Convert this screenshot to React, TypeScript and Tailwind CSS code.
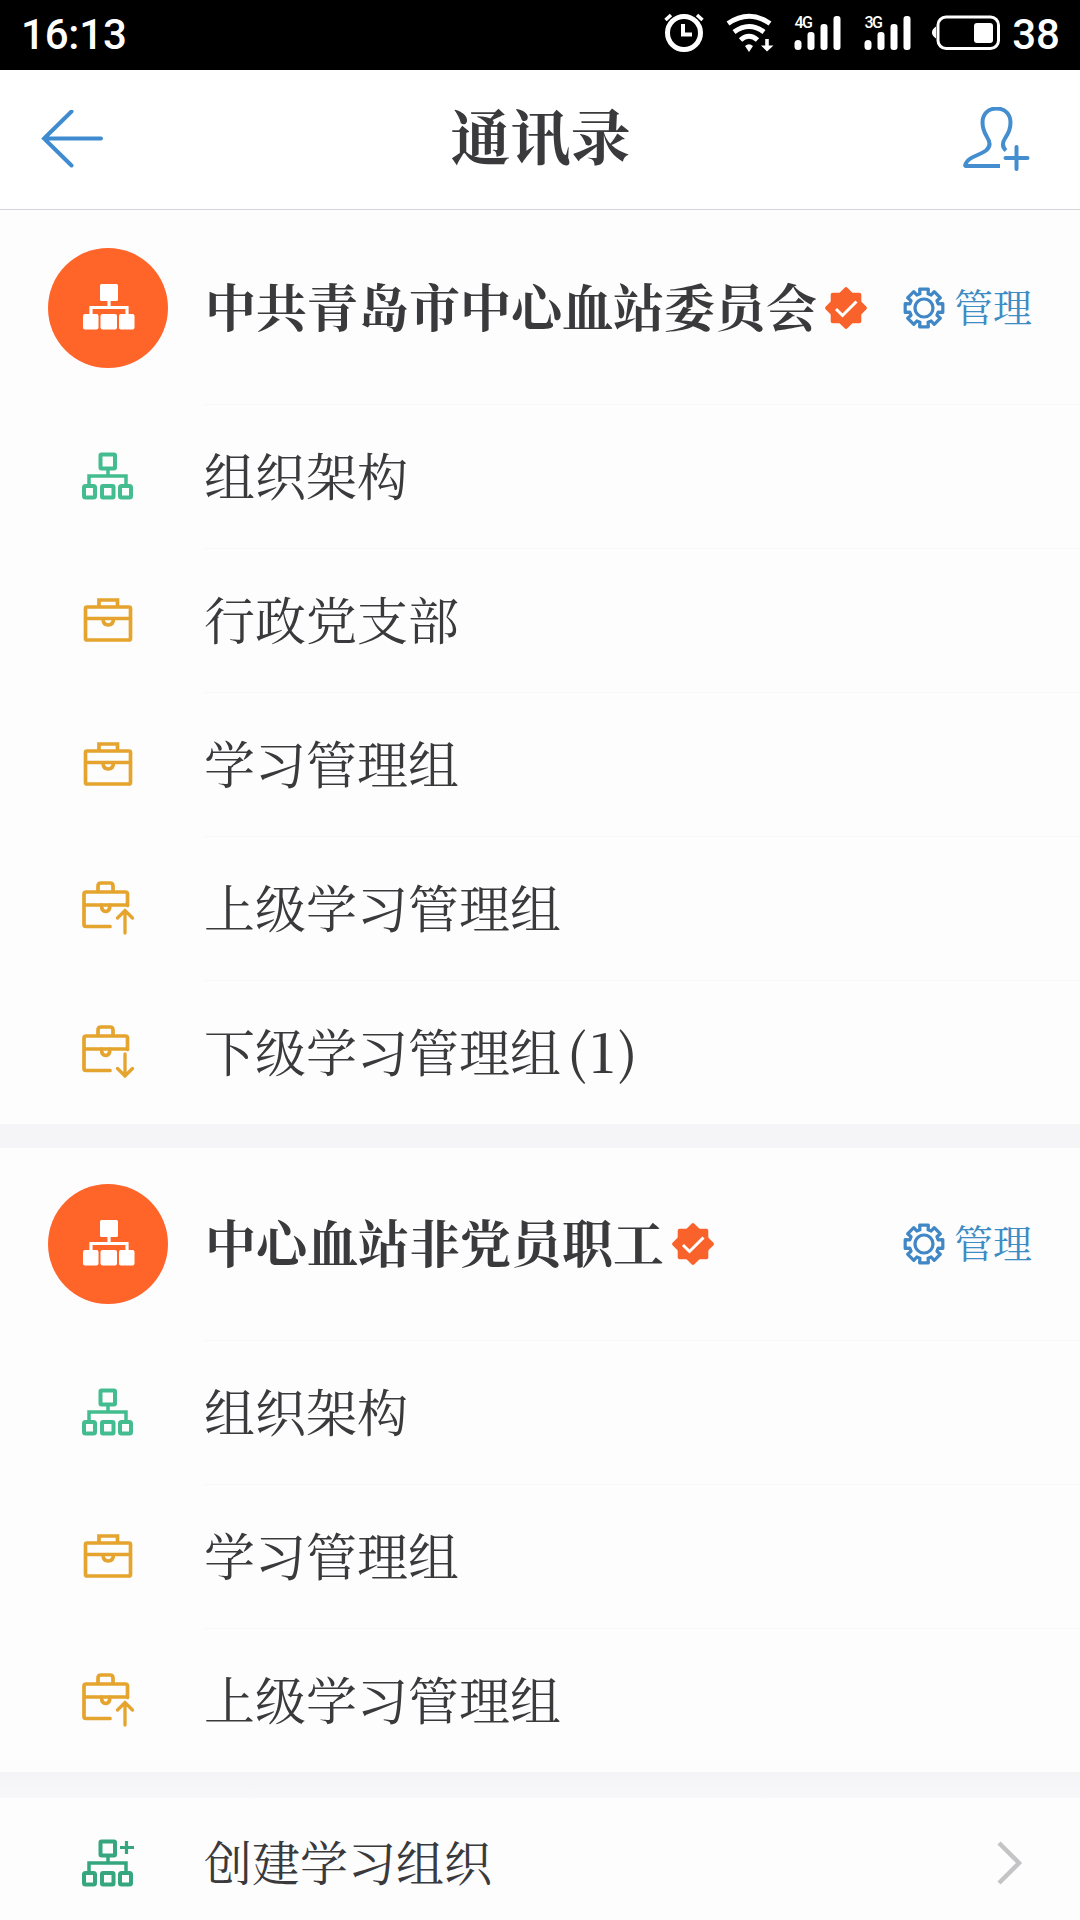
import type { ReactNode } from "react";

type RowIcon = "org" | "case" | "caseUp" | "caseDown";

type Row = {
    icon: RowIcon;
    label: string;
    count?: string;
};

const partyRows: Row[] = [
    { icon: "org", label: "组织架构" },
    { icon: "case", label: "行政党支部" },
    { icon: "case", label: "学习管理组" },
    { icon: "caseUp", label: "上级学习管理组" },
    { icon: "caseDown", label: "下级学习管理组", count: "(1)" },
];

const staffRows: Row[] = [
    { icon: "org", label: "组织架构" },
    { icon: "case", label: "学习管理组" },
    { icon: "caseUp", label: "上级学习管理组" },
];

// outline of the eight-toothed gear: [radius, degrees from the tooth centre]
const toothCorners = [[14.8, -16], [19.3, -13], [19.3, 13], [14.8, 16]];
const gearPoints = Array.from({ length: 8 }, (_, tooth) =>
    toothCorners.map(([r, deg]) => {
        const a = ((tooth * 45 + deg) * Math.PI) / 180;
        return `${(r * Math.cos(a)).toFixed(2)},${(r * Math.sin(a)).toFixed(2)}`;
    }).join(" ")
).join(" ");

function Signal({ type }: { type: string }) {
    return (
        <svg className="h-[38px] w-12" viewBox="0 0 48 38" fill="#fff">
            <text x="0.5" y="13.5" fontSize="16" fontWeight="500" fontFamily="Roboto, sans-serif" textLength="18.5">{type}</text>
            <rect x="0.5" y="26" width="7" height="10" rx="3.5" />
            <rect x="13.5" y="18" width="7" height="18" rx="3" />
            <rect x="26.5" y="10" width="7" height="26" rx="3" />
            <rect x="39.5" y="2" width="7" height="34" rx="3" />
        </svg>
    );
}

function StatusBar() {
    return (
        <div className="flex h-[70px] items-center bg-black pl-[21px] pr-[20px] pb-1 font-[Roboto,sans-serif] text-[42px] font-medium text-white">
            <span className="flex-1 pt-0.5 tracking-[-0.2px]">16:13</span>
            <svg className="mr-[22px] h-10 w-10" viewBox="0 0 40 40" fill="none" stroke="#fff">
                <circle cx="20" cy="20" r="16.5" strokeWidth="5" />
                <path d="M19 11v10.500h9" strokeWidth="4" />
                <path d="M1.500 7 7 2M38.500 7 33 2" strokeWidth="3.500" />
            </svg>
            <svg className="mr-5 h-10 w-12" viewBox="0 0 48 40" fill="none" stroke="#fff" strokeWidth="5">
                <path d="M2 10.500Q23-4 44 10.500" />
                <path d="M8 19Q23 8 38 19" />
                <path d="M14.500 27Q23 19.500 31.500 27" />
                <path d="M19 33q4-3.500 8 0l-4 6z" fill="#fff" stroke="none" />
                <path d="M41 26v9" strokeWidth="3.600" />
                <path d="M35 32.500h12.500L41 38.500z" fill="#fff" stroke="none" />
            </svg>
            <Signal type="4G" />
            <span className="w-[22px]" />
            <Signal type="3G" />
            <svg className="ml-[18px] mr-[12px] h-[38px] w-[70px]" viewBox="0 0 70 38">
                <rect x="8" y="3" width="60.500" height="31.500" rx="8" fill="none" stroke="#fff" strokeWidth="3" />
                <path d="M6 12.500C3 14.500 2 16.500 2 18.500s1 4 4 6z" fill="#fff" />
                <rect x="44" y="9" width="19" height="20" rx="3" fill="#fff" />
            </svg>
            <span className="pt-0.5">38</span>
        </div>
    );
}

function OrgIcon({ plus = false }: { plus?: boolean }) {
    return (
        <svg className="h-12 w-[54px]" viewBox="0 0 54 48" fill="none" stroke={plus ? "#35a67e" : "#43bd8f"} strokeWidth="4">
            <rect x="19.500" y="2.500" width="14.500" height="14" rx="1" />
            <path d="M27 17v6M8 33v-9h37v9" strokeWidth="3.500" />
            <rect x="3" y="34" width="11" height="11.500" rx="1.500" />
            <rect x="21" y="34" width="11.500" height="11.500" rx="1" />
            <rect x="39" y="34" width="11" height="11.500" rx="1.500" />
            {plus && <path d="M45.500 2v13M39 8.500h14" strokeWidth="3.200" />}
        </svg>
    );
}

function CaseIcon() {
    return (
        <svg className="h-12 w-[54px]" viewBox="0 0 54 48" fill="none" stroke="#e4a42e" strokeWidth="3.700">
            <rect x="4.500" y="11" width="45" height="33" rx="1.500" />
            <path d="M18 10V4h18.500v6M4.500 22.500h45" />
            <path d="M22 22.500q0 6.500 5.200 6.500t5.300-6.500" />
        </svg>
    );
}

function CaseArrowIcon({ down = false }: { down?: boolean }) {
    return (
        <svg className="h-[54px] w-[54px]" viewBox="0 0 54 54" fill="none" stroke="#e4a42e" strokeWidth="3.700" strokeLinecap="round">
            <path d="M29 45.500H5q-2 0-2-2V13q0-2 2-2h39.500q2 0 2 2v11.500M3 24h43" />
            <path d="M17 10V5q0-3 3-3h9q3 0 3 3v5" />
            <path d="M20.500 24q0 6.500 4.200 6.500t4.200-6.500" />
            {down ? (
                <path d="M44 29v22M36.500 43.500l7.500 7.500 7.500-7.500" strokeWidth="3.300" />
            ) : (
                <path d="M44 52V30M36.500 37l7.500-7.500 7.500 7.500" strokeWidth="3.300" />
            )}
        </svg>
    );
}

function Badge() {
    return (
        <svg className="ml-2 h-[42px] w-[42px]" viewBox="-21 -21 42 42">
            <rect x="-15.300" y="-15.300" width="30.600" height="30.600" rx="2" fill="#f9632b" />
            <rect x="-15.300" y="-15.300" width="30.600" height="30.600" rx="2" fill="#f9632b" transform="rotate(45)" />
            <path d="M-10 1l6.500 6.500L10.500-6.500" fill="none" stroke="#fff" strokeWidth="3" />
        </svg>
    );
}

function Gear() {
    return (
        <svg className="h-[44px] w-[44px]" viewBox="-22 -22 44 44" fill="none" stroke="#3f87c5" strokeWidth="3.200" strokeLinejoin="round">
            <polygon points={gearPoints} />
            <circle r="9" />
        </svg>
    );
}

function GroupHeader({ name }: { name: string }) {
    return (
        <div className="flex h-[192px] items-center pl-12 pr-12">
            <div className="flex h-[120px] w-[120px] items-center justify-center rounded-full bg-[#ff6429]">
                <svg className="ml-0.5 mb-0.5 h-[46px] w-[52px]" viewBox="0 0 52 46" fill="#fff">
                    <rect x="17" y="0" width="18" height="17" rx="1.500" />
                    <path d="M26 17v6M8 32v-8.500h36V32" fill="none" stroke="#fff" strokeWidth="3.200" />
                    <rect x="0" y="30" width="15.500" height="15.500" rx="2" />
                    <rect x="17.500" y="30" width="16.500" height="15.500" rx="2" />
                    <rect x="36" y="30" width="15.500" height="15.500" rx="2" />
                </svg>
            </div>
            <h2 className="ml-[37px] pb-1.5 text-[51px] font-bold leading-none whitespace-nowrap">{name}</h2>
            <Badge />
            <div className="ml-auto flex items-center gap-2 text-[39px] leading-none text-[#3d8cc4]">
                <Gear />
                <span className="pb-1.5">管理</span>
            </div>
        </div>
    );
}

function ListRow({ icon, children }: { icon: ReactNode; children: ReactNode }) {
    return (
        <div className="flex h-36 items-center pl-[81px]">
            {icon}
            <div className="ml-[69px] flex h-full flex-1 items-center border-t border-[#f8f8fa] pb-1 text-[51px] leading-none">{children}</div>
        </div>
    );
}

function Group({ name, rows }: { name: string; rows: Row[] }) {
    return (
        <section>
            <GroupHeader name={name} />
            {rows.map((row) => (
                <ListRow
                    key={row.label}
                    icon={
                        row.icon === "org" ? <OrgIcon /> :
                        row.icon === "case" ? <CaseIcon /> :
                        <CaseArrowIcon down={row.icon === "caseDown"} />
                    }
                >
                    {row.label}
                    {row.count && <span className="ml-1.5 text-[53px] font-medium tracking-[3px]">{row.count}</span>}
                </ListRow>
            ))}
        </section>
    );
}

export default function App() {
    return (
        <div className="h-[1920px] w-[1080px] overflow-hidden bg-[#fdfdfe] font-['Noto_Serif_CJK_SC','Liberation_Serif','Noto_Sans_CJK_SC',serif] text-[#3a3a3d]" lang="zh-CN">
            <StatusBar />

            <header className="flex h-[140px] items-center border-b-[1.5px] border-[#d3d5da] bg-white pl-10 pr-[49px]">
                <svg className="h-[60px] w-[66px]" viewBox="0 0 66 60" fill="none" stroke="#3f8bd0" strokeWidth="4" strokeLinecap="round">
                    <path d="M61 28.500H4M31.500 1.500 4 28.500l27.500 27" />
                </svg>
                <h1 className="flex-1 pb-3 pl-3.5 text-center text-[60px] font-bold leading-none">通讯录</h1>
                <svg className="h-[66px] w-[70px]" viewBox="0 0 70 66" fill="none" stroke="#448ecf" strokeWidth="4">
                    <path d="M39 59H4.500C3.500 59 5 55 8 52.500c6-4.500 11-4.500 17-9 5-4 4-9 1-13.500-3-5-4.500-9-4.500-14.500C21.500 7 27 1.500 35.500 1.500S49.500 7 49.500 15.500c0 6-1.500 10-5 15-3 4.500-4 9 .5 13" />
                    <path d="M44.500 51h22M55.500 40v22" strokeLinecap="round" />
                </svg>
            </header>

            <main className="pt-0.5">
                <Group name="中共青岛市中心血站委员会" rows={partyRows} />
                <div className="h-6 bg-[#f5f5f7]" />
                <Group name="中心血站非党员职工" rows={staffRows} />
                <div className="h-[26px] bg-linear-to-b from-[#f4f4f6] to-[#f8f8fa]" />
                <div className="flex h-[130px] items-center pl-[81px] pr-[56px]">
                    <OrgIcon plus />
                    <span className="ml-[69px] flex-1 pb-1 text-[48px] leading-none">创建学习组织</span>
                    <svg className="h-[46px] w-[28px]" viewBox="0 0 28 46" fill="none" stroke="#c4c4c6" strokeWidth="4.500">
                        <path d="m3 3 20 20L3 43" />
                    </svg>
                </div>
            </main>
        </div>
    );
}
